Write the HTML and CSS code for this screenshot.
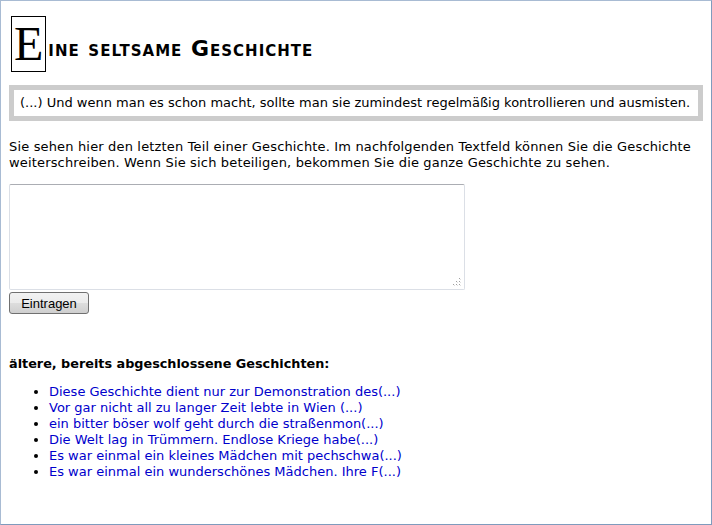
FILE: index.html
```html
<!DOCTYPE html>
<html lang="de">
<head>
<meta charset="utf-8">
<title>Eine seltsame Geschichte</title>
<link rel="stylesheet" href="styles.css">
</head>
<body>
<div class="frame">
  <h1 class="title"><span class="initial">E</span><span class="rest">ine seltsame Geschichte</span></h1>
  <div class="quote">(...) Und wenn man es schon macht, sollte man sie zumindest regelmäßig kontrollieren und ausmisten.</div>
  <p class="intro">Sie sehen hier den letzten Teil einer Geschichte. Im nachfolgenden Textfeld können Sie die Geschichte weiterschreiben. Wenn Sie sich beteiligen, bekommen Sie die ganze Geschichte zu sehen.</p>
  <form class="form">
    <div class="story-wrap">
      <textarea class="story"></textarea>
      <svg class="grip" width="8" height="8" viewBox="0 0 8 8"><g fill="#a0a0a0"><rect x="6" y="0" width="1" height="1"/><rect x="6" y="3" width="1" height="1"/><rect x="3" y="3" width="1" height="1"/><rect x="6" y="6" width="1" height="1"/><rect x="3" y="6" width="1" height="1"/><rect x="0" y="6" width="1" height="1"/></g><g fill="#e0e0e0"><rect x="7" y="1" width="1" height="1"/><rect x="7" y="4" width="1" height="1"/><rect x="4" y="4" width="1" height="1"/><rect x="7" y="7" width="1" height="1"/><rect x="4" y="7" width="1" height="1"/><rect x="1" y="7" width="1" height="1"/></g></svg>
    </div>
    <button type="button" class="submit">Eintragen</button>
  </form>
  <h2 class="older">ältere, bereits abgeschlossene Geschichten:</h2>
  <ul class="stories">
    <li><a href="#">Diese Geschichte dient nur zur Demonstration des(...)</a></li>
    <li><a href="#">Vor gar nicht all zu langer Zeit lebte in Wien (...)</a></li>
    <li><a href="#">ein bitter böser wolf geht durch die straßenmon(...)</a></li>
    <li><a href="#">Die Welt lag in Trümmern. Endlose Kriege habe(...)</a></li>
    <li><a href="#">Es war einmal ein kleines Mädchen mit pechschwa(...)</a></li>
    <li><a href="#">Es war einmal ein wunderschönes Mädchen. Ihre F(...)</a></li>
  </ul>
</div>
</body>
</html>
```
FILE: styles.css
```css
html, body {
  margin: 0;
  padding: 0;
  background: #fff;
}
.frame {
  box-sizing: border-box;
  width: 712px;
  height: 525px;
  border: 1px solid #a8bbd3;
  border-right-color: #7f9bbd;
  border-bottom-color: #7f9bbd;
  padding: 15px 8px 8px 8px;
  font-family: "DejaVu Sans", sans-serif;
  font-size: 13px;
  color: #000;
}
.title {
  display: flex;
  align-items: flex-start;
  margin: 0;
  height: 56px;
  font-weight: bold;
  white-space: nowrap;
}
.initial {
  box-sizing: border-box;
  height: 56px;
  font-family: "Liberation Serif", serif;
  font-weight: normal;
  font-size: 48px;
  line-height: 54px;
  border: 1px solid #000;
  padding: 0 2px;
  margin-left: 2px;
}
.rest {
  margin-top: 23px;
  line-height: 20px;
  font-family: "DejaVu Sans", sans-serif;
  font-size: 22px;
  letter-spacing: 1px;
  font-variant: small-caps;
  margin-left: 2px;
}
.quote {
  margin-top: 13px;
  border: 5px solid #cccccc;
  padding: 5px 6px 5px 6px;
  line-height: 16px;
}
.intro {
  margin: 18px 0 0 0;
  line-height: 16px;
  letter-spacing: 0.16px;
}
.form {
  margin-top: 13px;
  display: flex;
  flex-direction: column;
  align-items: flex-start;
  gap: 2px;
}
.story-wrap {
  position: relative;
  width: 456px;
  height: 106px;
}
.story {
  display: block;
  box-sizing: border-box;
  width: 456px;
  height: 106px;
  margin: 0;
  border: 1px solid #dbdfe6;
  border-top-color: #abadb3;
  border-radius: 2px;
  resize: none;
}
.grip {
  position: absolute;
  right: 4px;
  bottom: 4px;
  display: block;
}
.submit {
  box-sizing: border-box;
  width: 80px;
  height: 22px;
  font-family: "Liberation Sans", Arial, sans-serif;
  font-size: 13px;
  color: #000;
  border: 1px solid #707070;
  border-radius: 3px;
  background: linear-gradient(#f2f2f2 0%, #ebebeb 50%, #dddddd 51%, #cfcfcf 100%);
  padding: 0;
}
.older {
  font-family: "DejaVu Sans", sans-serif;
  font-size: 12.8px;
  font-weight: bold;
  margin: 42px 0 0 0;
  line-height: 16px;
}
.stories {
  margin: 12px 0 0 0;
  padding-left: 40px;
  font-family: "DejaVu Sans", sans-serif;
  font-size: 13px;
  line-height: 16px;
}
.stories a {
  color: #0000cc;
  text-decoration: none;
}
```
